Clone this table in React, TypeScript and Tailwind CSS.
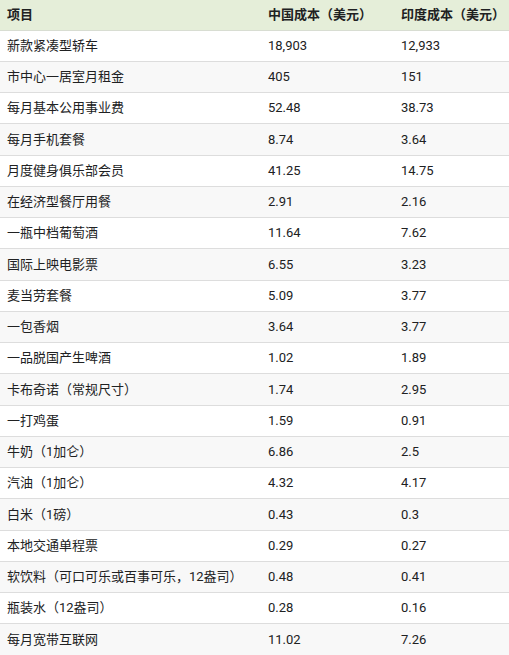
const rows: [string, string, string][] = [
  ["新款紧凑型轿车", "18,903", "12,933"],
  ["市中心一居室月租金", "405", "151"],
  ["每月基本公用事业费", "52.48", "38.73"],
  ["每月手机套餐", "8.74", "3.64"],
  ["月度健身俱乐部会员", "41.25", "14.75"],
  ["在经济型餐厅用餐", "2.91", "2.16"],
  ["一瓶中档葡萄酒", "11.64", "7.62"],
  ["国际上映电影票", "6.55", "3.23"],
  ["麦当劳套餐", "5.09", "3.77"],
  ["一包香烟", "3.64", "3.77"],
  ["一品脱国产生啤酒", "1.02", "1.89"],
  ["卡布奇诺（常规尺寸）", "1.74", "2.95"],
  ["一打鸡蛋", "1.59", "0.91"],
  ["牛奶（1加仑）", "6.86", "2.5"],
  ["汽油（1加仑）", "4.32", "4.17"],
  ["白米（1磅）", "0.43", "0.3"],
  ["本地交通单程票", "0.29", "0.27"],
  ["软饮料（可口可乐或百事可乐，12盎司）", "0.48", "0.41"],
  ["瓶装水（12盎司）", "0.28", "0.16"],
  ["每月宽带互联网", "11.02", "7.26"],
];

export default function App() {
  return (
    <div
      className="w-[509px] h-[655px] overflow-hidden bg-white text-[13px] text-[#202122]"
      style={{ fontFamily: 'Roboto, "Noto Sans CJK SC", sans-serif' }}
    >
      <table className="w-full border-collapse table-fixed">
        <colgroup>
          <col className="w-[261px]" />
          <col className="w-[133px]" />
          <col />
        </colgroup>
        <thead>
          <tr className="h-[30px] bg-[#e5eed9] border-b border-[#d8ddd2]">
            <th className="px-[7px] text-left font-bold">项目</th>
            <th className="px-[7px] text-left font-bold">中国成本（美元）</th>
            <th className="px-[7px] text-left font-bold">印度成本（美元）</th>
          </tr>
        </thead>
        <tbody>
          {rows.map(([item, cn, inr], i) => (
            <tr
              key={item}
              className={
                "h-[31.25px] border-b border-[#dddddd] " +
                (i % 2 === 0 ? "bg-white" : "bg-[#f8f8f8]")
              }
            >
              <td className="px-[7px] whitespace-nowrap">{item}</td>
              <td className="px-[7px]">{cn}</td>
              <td className="px-[7px]">{inr}</td>
            </tr>
          ))}
        </tbody>
      </table>
    </div>
  );
}
